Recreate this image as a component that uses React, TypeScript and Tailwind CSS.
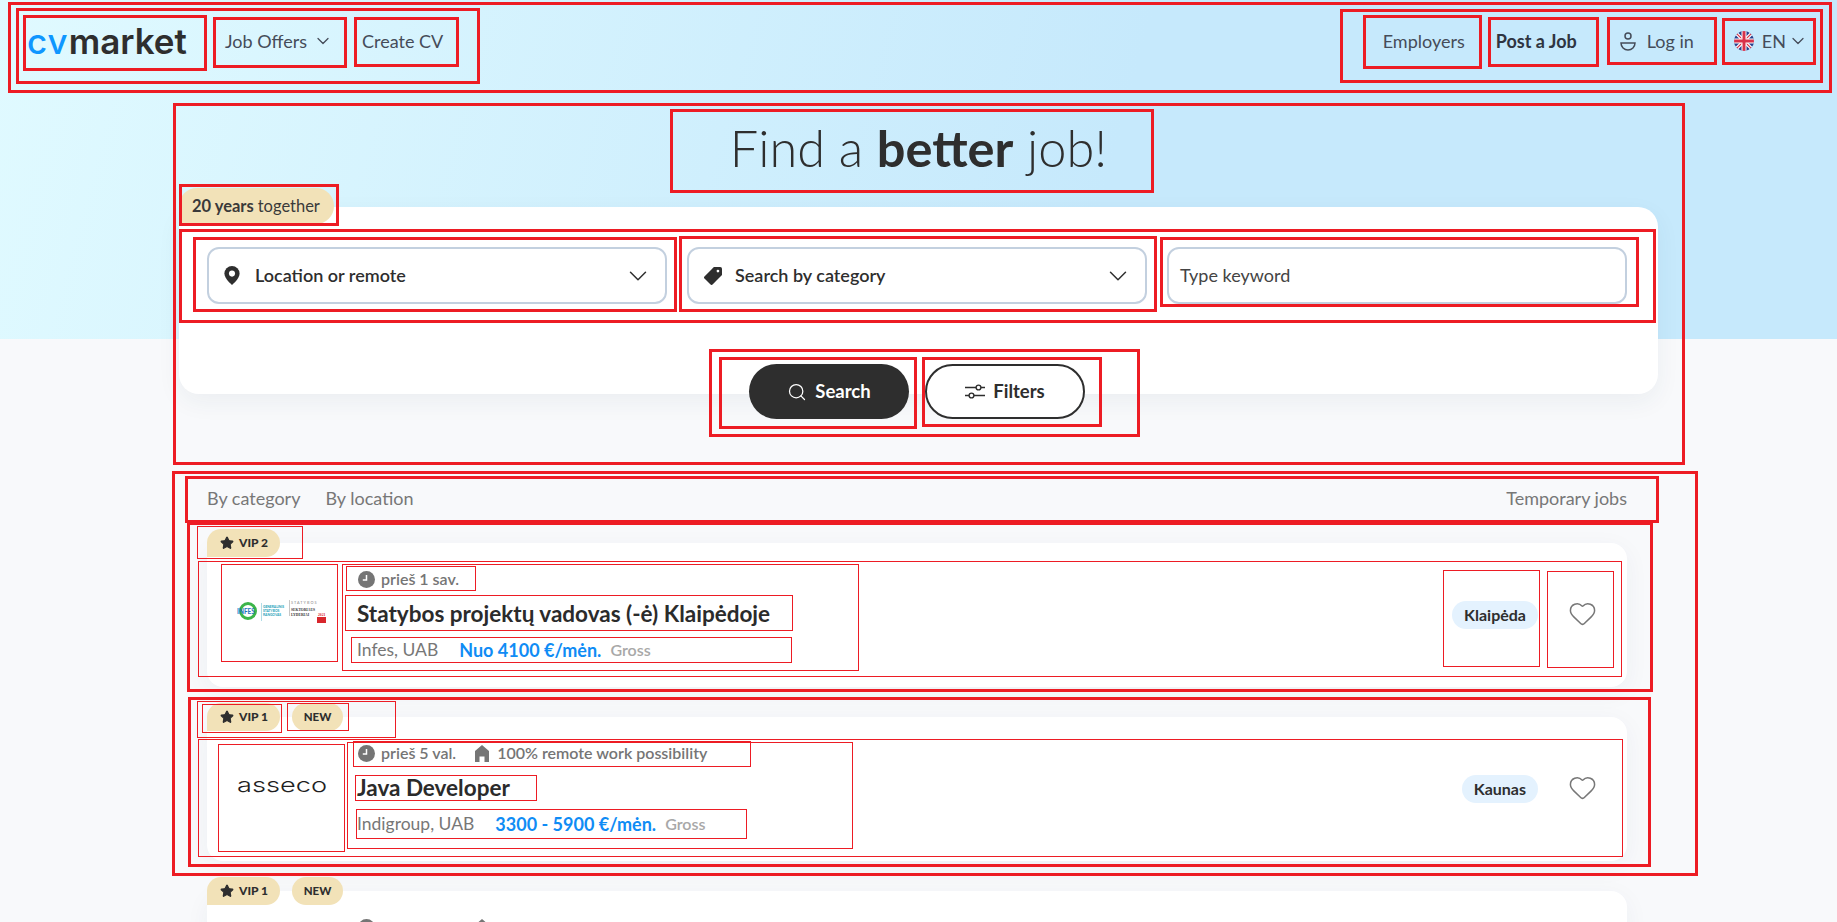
import React from 'react';
import { ChevronDown, Heart, Search, Star } from 'lucide-react';

// Red frames that sit on top of the reference screenshot
const thickFrames = [
  'left-[8px] top-[2px] w-[1824px] h-[91px]',
  'left-[16px] top-[8px] w-[464px] h-[76px]',
  'left-[23px] top-[15px] w-[184px] h-[56px]',
  'left-[213px] top-[17px] w-[134px] h-[51px]',
  'left-[354px] top-[17px] w-[105px] h-[50px]',
  'left-[1340px] top-[9px] w-[483px] h-[74px]',
  'left-[1363px] top-[15px] w-[119px] h-[54px]',
  'left-[1488px] top-[17px] w-[111px] h-[50px]',
  'left-[1607px] top-[17px] w-[110px] h-[48px]',
  'left-[1722px] top-[18px] w-[94px] h-[47px]',
  'left-[173px] top-[103px] w-[1512px] h-[362px]',
  'left-[670px] top-[109px] w-[484px] h-[84px]',
  'left-[179px] top-[184px] w-[160px] h-[42px]',
  'left-[179px] top-[229px] w-[1477px] h-[94px]',
  'left-[193px] top-[237px] w-[484px] h-[75px]',
  'left-[679px] top-[236px] w-[478px] h-[76px]',
  'left-[1160px] top-[237px] w-[479px] h-[70px]',
  'left-[709px] top-[349px] w-[431px] h-[88px]',
  'left-[719px] top-[357px] w-[198px] h-[72px]',
  'left-[922px] top-[357px] w-[180px] h-[70px]',
  'left-[172px] top-[471px] w-[1526px] h-[405px]',
  'left-[185px] top-[476px] w-[1474px] h-[47px]',
  'left-[187px] top-[522px] w-[1466px] h-[170px]',
  'left-[188px] top-[697px] w-[1463px] h-[170px]',
];

const thinFrames = [
  'left-[197px] top-[526px] w-[106px] h-[33px]',
  'left-[198px] top-[561px] w-[1424px] h-[116px]',
  'left-[221px] top-[564px] w-[117px] h-[98px]',
  'left-[342px] top-[564px] w-[517px] h-[107px]',
  'left-[346px] top-[566px] w-[130px] h-[25px]',
  'left-[345px] top-[595px] w-[448px] h-[36px]',
  'left-[351px] top-[637px] w-[441px] h-[26px]',
  'left-[1443px] top-[570px] w-[97px] h-[97px]',
  'left-[1547px] top-[571px] w-[67px] h-[97px]',
  'left-[197px] top-[701px] w-[199px] h-[37px]',
  'left-[202px] top-[704px] w-[80px] h-[29px]',
  'left-[287px] top-[703px] w-[62px] h-[28px]',
  'left-[198px] top-[739px] w-[1425px] h-[118px]',
  'left-[218px] top-[744px] w-[127px] h-[108px]',
  'left-[347px] top-[742px] w-[506px] h-[107px]',
  'left-[353px] top-[741px] w-[398px] h-[26px]',
  'left-[355px] top-[775px] w-[182px] h-[26px]',
  'left-[356px] top-[809px] w-[391px] h-[30px]',
];

function PinIcon() {
  return (
    <svg viewBox="4 2 16 20" className="w-[16px] h-[19px] shrink-0">
      <path d="M12 2a8 8 0 0 0-8 8c0 5.5 8 12 8 12s8-6.5 8-12a8 8 0 0 0-8-8z" fill="#2e2e2e" />
      <circle cx="12" cy="10" r="3.2" fill="#fff" />
    </svg>
  );
}

function TagIcon() {
  return (
    <svg viewBox="2 2 20 20" className="w-[18px] h-[18px] shrink-0">
      <path d="M13 2h7a2 2 0 0 1 2 2v7L11.5 21.5a1.6 1.6 0 0 1-2.2 0L2.5 14.7a1.6 1.6 0 0 1 0-2.2z" fill="#2e2e2e" />
      <circle cx="17.5" cy="6.5" r="1.5" fill="#fff" />
    </svg>
  );
}

function UserIcon() {
  return (
    <svg viewBox="0 0 16 19" fill="none" stroke="#454c59" strokeWidth="1.5" className="w-[16px] h-[19px]">
      <circle cx="8" cy="4" r="3" />
      <path d="M1 11h14a7 7 0 0 1-14 0z" />
    </svg>
  );
}

function FiltersIcon() {
  return (
    <svg viewBox="0 0 20 15" fill="none" stroke="#2e2e2e" strokeWidth="1.4" className="w-[20px] h-[15px]">
      <path d="M0 3.5h11M16 3.5h4M0 11.5h4M9 11.5h11" />
      <circle cx="13.5" cy="3.5" r="2.4" />
      <circle cx="6.5" cy="11.5" r="2.4" />
    </svg>
  );
}

function UkFlag() {
  return (
    <svg viewBox="0 0 20 20" className="w-[20px] h-[20px] rounded-full">
      <rect width="20" height="20" fill="#27418f" />
      <path d="M0 0l20 20M20 0L0 20" stroke="#fff" strokeWidth="3.5" />
      <path d="M0 0l20 20M20 0L0 20" stroke="#d8324a" strokeWidth="1.2" />
      <path d="M10 0v20M0 10h20" stroke="#fff" strokeWidth="5" />
      <path d="M10 0v20M0 10h20" stroke="#d8324a" strokeWidth="3" />
    </svg>
  );
}

function ClockIcon() {
  return (
    <svg viewBox="0 0 17 17" className="w-[17px] h-[17px] shrink-0">
      <circle cx="8.5" cy="8.5" r="8.5" fill="#757575" />
      <path d="M8.5 4v5H4.8" fill="none" stroke="#fff" strokeWidth="1.5" />
    </svg>
  );
}

function HomeIcon() {
  return (
    <svg viewBox="0 0 16 17" className="w-[16px] h-[17px] shrink-0">
      <path d="M8 0l7 6v11h-4.500v-5.500h-5V17H1V6z" fill="#757575" />
    </svg>
  );
}

function InfesLogo() {
  return (
    <svg viewBox="0 0 90 24" className="w-[90px] h-[24px] -mt-[6px]">
      <circle cx="11" cy="11" r="7.5" fill="none" stroke="#3cb54a" strokeWidth="3" />
      <text x="0" y="13.5" fontSize="6.5" fontWeight="700" fill="#1c75bc" fontFamily="Lato, sans-serif">INFES</text>
      <rect x="24" y="3" width="0.6" height="18" fill="#7cc7d8" />
      <text x="26" y="8" fontSize="3.3" fontWeight="700" fill="#19a0b8" fontFamily="Lato, sans-serif">GENERALINIS</text>
      <text x="26" y="12" fontSize="3.3" fontWeight="700" fill="#19a0b8" fontFamily="Lato, sans-serif">STATYBOS</text>
      <text x="26" y="16" fontSize="3.3" fontWeight="700" fill="#19a0b8" fontFamily="Lato, sans-serif">RANGOVAS</text>
      <rect x="52" y="0" width="0.8" height="16" fill="#b9b9b9" />
      <text x="54" y="4" fontSize="3.8" letterSpacing="1" fill="#888" fontFamily="Lato, sans-serif">STATYBOS</text>
      <text x="54" y="10.5" fontSize="3.7" fontWeight="700" fill="#333" fontFamily="'Liberation Serif', serif">SEKTORIAUS</text>
      <text x="54" y="15.5" fontSize="3.7" fontWeight="700" fill="#333" fontFamily="'Liberation Serif', serif">LYDERIAI</text>
      <text x="81" y="15.5" fontSize="3.7" fontWeight="700" fill="#d8262c" fontFamily="'Liberation Serif', serif">2021</text>
      <rect x="80" y="17" width="9" height="6" fill="#d8262c" />
    </svg>
  );
}

function AssecoLogo() {
  return (
    <svg viewBox="0 0 90 28" className="w-[90px] h-[28px] -mt-[6px]">
      <text x="0" y="20" fontSize="20" fontWeight="300" fill="#1f1f1f" fontFamily="Inter, sans-serif" textLength="90" lengthAdjust="spacingAndGlyphs">asseco</text>
    </svg>
  );
}

type Job = {
  badges: string[];
  logo?: React.ReactNode;
  time: string;
  remote?: boolean;
  title?: string;
  company?: string;
  salary?: string;
  city?: string;
};

const jobs: Job[] = [
  {
    badges: ['VIP 2'],
    logo: <InfesLogo />,
    time: 'prieš 1 sav.',
    title: 'Statybos projektų vadovas (-ė) Klaipėdoje',
    company: 'Infes, UAB',
    salary: 'Nuo 4100 €/mėn.',
    city: 'Klaipėda',
  },
  {
    badges: ['VIP 1', 'NEW'],
    logo: <AssecoLogo />,
    time: 'prieš 5 val.',
    remote: true,
    title: 'Java Developer',
    company: 'Indigroup, UAB',
    salary: '3300 - 5900 €/mėn.',
    city: 'Kaunas',
  },
  // Only the top of this one is on screen
  {
    badges: ['VIP 1', 'NEW'],
    time: 'prieš 8 val.',
    remote: true,
  },
];

function JobCard({ job }: { job: Job }) {
  return (
    <div className="relative h-[144px] shrink-0 flex rounded-2xl bg-white shadow-[0_6px_24px_rgba(40,60,90,0.05)]">
      {/* Badges over the top edge */}
      <div className="absolute left-0 -top-[14px] flex gap-3">
        {job.badges.map((badge) => (
          <span
            key={badge}
            className={
              badge === 'NEW'
                ? 'h-[28px] w-[51px] flex items-center justify-center rounded-full bg-[#f2e2b8] text-[11.5px] font-black text-[#2e2e2e]'
                : 'h-[28px] w-[73px] flex items-center gap-[5px] pl-[13px] rounded-[14px] rounded-bl-none bg-[#f2e2b8] text-[12px] font-black text-[#2e2e2e]'
            }
          >
            {badge !== 'NEW' && <Star size={14} fill="#2e2e2e" stroke="#2e2e2e" />}
            {badge}
          </span>
        ))}
      </div>

      <div className="w-[150px] shrink-0 flex items-center justify-center">{job.logo}</div>

      <div className="pt-[24px] flex flex-col">
        <div className="h-[24px] flex items-center pl-[1px] text-[16px] font-semibold text-[#757575]">
          <ClockIcon />
          <span className="ml-[6px]">{job.time}</span>
          {job.remote && (
            <>
              <span className="ml-[18px]"><HomeIcon /></span>
              <span className="ml-[7px]">100% remote work possibility</span>
            </>
          )}
        </div>
        {job.title && (
          <div className="mt-2 h-[30px] leading-[30px] text-[22.5px] font-bold text-[#2b2b2b]">{job.title}</div>
        )}
        {job.company && (
          <div className="mt-[9px] h-[24px] flex items-center text-[17.5px] text-[#777777]">
            <span>{job.company}</span>
            <span className="ml-[21px] text-[18px] font-bold text-[#0f8cf5]">{job.salary}</span>
            <span className="ml-[9px] text-[16px] font-semibold text-[#a8a8a8]">Gross</span>
          </div>
        )}
      </div>

      {job.city && (
        <div className="ml-auto flex items-center pr-[30px]">
          <span className="h-[28px] px-[12px] flex items-center rounded-full bg-[#e4f2fe] text-[16px] font-bold text-[#2e2e2e]">
            {job.city}
          </span>
          <Heart size={29} strokeWidth={1.25} className="ml-[30px] -mt-[3px] text-[#777777]" />
        </div>
      )}
    </div>
  );
}

export default function App() {
  return (
    <div className="relative h-[922px] overflow-hidden bg-[#f8f9fb] bg-[linear-gradient(105deg,#e0faff_0%,#c6e9fc_60%,#c6e9fc_100%)] bg-no-repeat bg-[length:100%_339px] font-[Lato,sans-serif]">
      {/* Top bar */}
      <header className="h-[82px] flex items-center justify-between text-[18px] text-[#454c59]">
        <div className="flex items-center pl-[27px]">
          <span className="w-[186px] text-[35px] leading-none font-[Inter,sans-serif]">
            <span className="font-medium tracking-[1px] text-[#0f96ff]">cv</span>
            <span className="font-semibold text-[#2e2e2e]">market</span>
          </span>
          <span className="ml-[12px] flex items-center">
            Job Offers
            <ChevronDown size={20} strokeWidth={1.5} className="ml-[6px]" />
          </span>
          <span className="ml-[29px]">Create CV</span>
        </div>
        <div className="flex items-center pr-[29px]">
          <span>Employers</span>
          <span className="ml-[31px] font-bold text-[#2f3542]">Post a Job</span>
          <span className="ml-[43px]"><UserIcon /></span>
          <span className="ml-[11px]">Log in</span>
          <span className="ml-[40px]"><UkFlag /></span>
          <span className="ml-[8px]">EN</span>
          <ChevronDown size={20} strokeWidth={1.5} className="ml-[2px]" />
        </div>
      </header>

      <main className="w-[1479px] mx-auto">
        <h1 className="mt-[36px] h-[60px] text-center text-[50.5px] leading-[60px] font-light text-[#2e2e2e]">
          Find a <span className="font-bold">better</span> job!
        </h1>

        {/* Search panel */}
        <section className="relative flex flex-col mt-[29px] rounded-[20px] bg-white pt-[40px] pl-[28px] pr-[31px] shadow-[0_8px_24px_rgba(40,60,90,0.06)]">
          <div className="absolute left-0 -top-[19px] h-[36px] w-[155px] flex items-center pl-[13px] rounded-[18px] rounded-bl-none bg-[#f2e2b8] text-[16.5px] text-[#3a3a3a]">
            <b className="font-bold mr-1">20 years</b> together
          </div>

          <div className="grid grid-cols-3 gap-5">
            <div className="h-[57px] flex items-center pl-[15px] pr-[12px] rounded-xl border-2 border-[#c3d0df] text-[18px] font-semibold text-[#2e2e2e]">
              <PinIcon />
              <span className="ml-[15px]">Location or remote</span>
              <ChevronDown size={30} strokeWidth={1.2} className="ml-auto" />
            </div>
            <div className="h-[57px] flex items-center pl-[15px] pr-[12px] rounded-xl border-2 border-[#c3d0df] text-[18px] font-semibold text-[#2e2e2e]">
              <TagIcon />
              <span className="ml-[13px]">Search by category</span>
              <ChevronDown size={30} strokeWidth={1.2} className="ml-auto" />
            </div>
            <div className="h-[57px] flex items-center pl-[11px] rounded-xl border-2 border-[#c3d0df] text-[18px] text-[#444444]">
              Type keyword
            </div>
          </div>

          <div className="mt-[60px] -mb-[25px] flex justify-center gap-4">
            <button className="h-[55px] w-[160px] flex items-center justify-center gap-[8px] rounded-full bg-[#2e2e2e] text-[18.5px] font-bold text-white">
              <Search size={20} strokeWidth={1.5} />
              Search
            </button>
            <button className="h-[55px] w-[160px] flex items-center justify-center gap-[8px] rounded-full border-2 border-[#2e2e2e] bg-white text-[18.5px] font-bold text-[#2e2e2e]">
              <FiltersIcon />
              Filters
            </button>
          </div>
        </section>

        <section className="w-[1420px] ml-[28px] mt-[89px]">
          <div className="h-[30px] flex items-center gap-[25px] text-[18px] text-[#777777]">
            <span>By category</span>
            <span>By location</span>
            <span className="ml-auto">Temporary jobs</span>
          </div>
          <div className="mt-[30px] flex flex-col gap-[30px]">
            {jobs.map((job) => (
              <JobCard key={job.time} job={job} />
            ))}
          </div>
        </section>
      </main>

      {/* Annotation frames */}
      {thickFrames.map((pos) => (
        <div key={pos} className={`absolute border-[3px] border-[#ed1c24] ${pos}`} />
      ))}
      {thinFrames.map((pos) => (
        <div key={pos} className={`absolute border border-[#ed1c24] ${pos}`} />
      ))}
    </div>
  );
}
